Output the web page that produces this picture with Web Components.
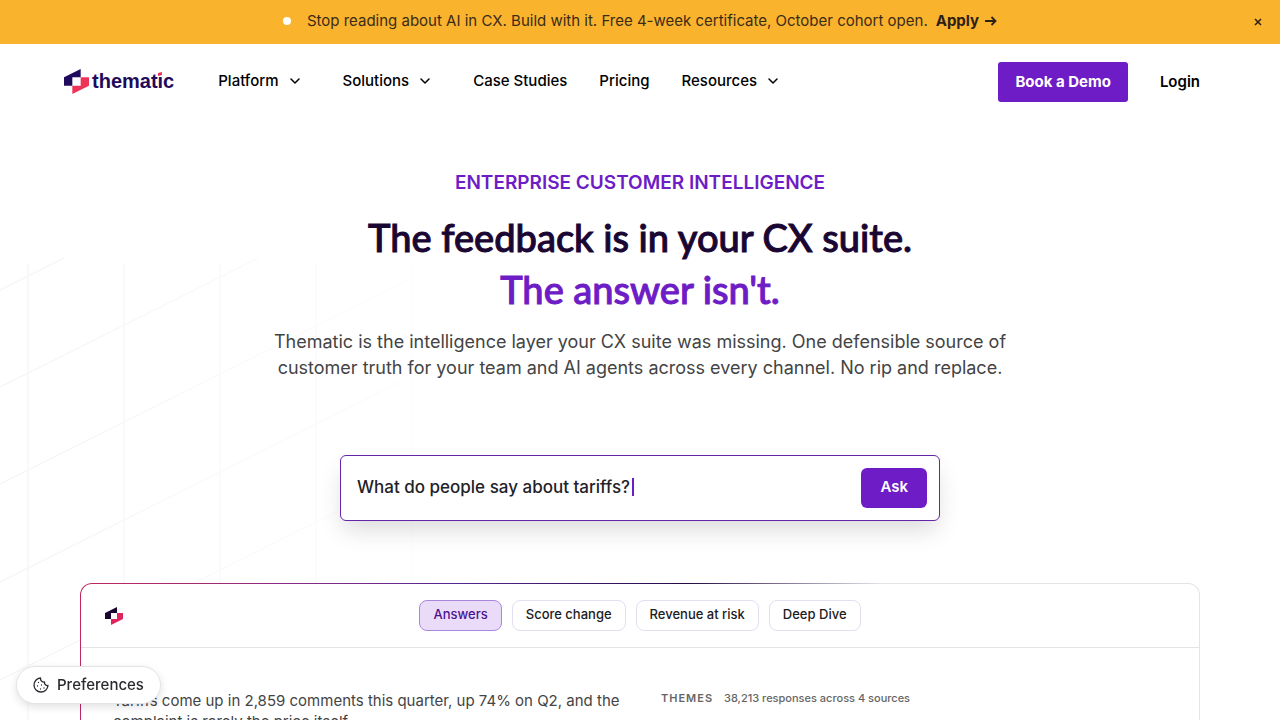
<!DOCTYPE html>
<html lang="en">
<head>
<meta charset="utf-8">
<title>Thematic</title>
<style>
html { scrollbar-width: none; }
body {
  margin: 0;
  background: #fff;
  color: #000;
  font-family: Inter, "Liberation Sans", sans-serif;
  font-size: 15px;
  line-height: 20px;
}
</style>
</head>
<body>
<promo-banner>
  Stop reading about AI in CX. Build with it. Free 4-week certificate, October cohort open.
  <a slot="action" href="#apply">Apply</a>
</promo-banner>
<site-header>
  <nav-item menu>Platform</nav-item>
  <nav-item menu>Solutions</nav-item>
  <nav-item>Case Studies</nav-item>
  <nav-item>Pricing</nav-item>
  <nav-item menu>Resources</nav-item>
</site-header>
<page-hero>
  <span slot="eyebrow">ENTERPRISE CUSTOMER INTELLIGENCE</span>
  <span slot="title">The feedback is in your CX suite.</span>
  <span slot="accent">The answer isn't.</span>
  Thematic is the intelligence layer your CX suite was missing. One defensible source of customer truth for your team and AI agents across every channel. No rip and replace.
  <ask-box slot="ask" value="What do people say about tariffs?"></ask-box>
  <answer-card slot="card">
    <tab-chip slot="tabs" selected>Answers</tab-chip>
    <tab-chip slot="tabs">Score change</tab-chip>
    <tab-chip slot="tabs">Revenue at risk</tab-chip>
    <tab-chip slot="tabs">Deep Dive</tab-chip>
    Tariffs come up in 2,859 comments this quarter, up 74% on Q2, and the complaint is rarely the price itself.
    <span slot="label">THEMES</span>
    <span slot="meta">38,213 responses across 4 sources</span>
  </answer-card>
</page-hero>
<cookie-preferences>Preferences</cookie-preferences>

<script>
  function define(name, html, setup) {
    const template = document.createElement('template');
    template.innerHTML = html;
    customElements.define(name, class extends HTMLElement {
      constructor() {
        super();
        this.attachShadow({ mode: 'open' });
        this.shadowRoot.appendChild(template.content.cloneNode(true));
      }

      $(x) {
        return this.shadowRoot.querySelector(x);
      }

      connectedCallback() {
        if (setup) setup(this);
      }
    });
  }

  define('brand-mark', `
<style>
:host { display: block; flex: none; width: 25px; }
svg { display: block; width: 100%; }
</style>
<svg viewBox="0 0 24 24" aria-hidden="true">
  <path fill="var(--mark-dark, #1f0a5c)" d="M0 8 16 0V8H8V16H0Z"/>
  <path fill="var(--mark-red, #ef3358)" d="M16 8H24V16L8 24V16H16Z"/>
</svg>
  `);

  define('promo-banner', `
<style>
:host {
  display: grid;
  grid-template-columns: 44px 1fr 44px;
  align-items: center;
  min-height: 44px;
  background: #fab32d;
  color: #3a2c18;
}
.message {
  grid-column: 2;
  display: flex;
  align-items: center;
  justify-content: center;
  padding-bottom: 2px;
}
.dot {
  width: 8px;
  height: 8px;
  border-radius: 50%;
  background: #fff;
  margin-right: 16px;
}
.action {
  display: flex;
  align-items: center;
  gap: 6px;
  margin-left: 8px;
  color: #2b2118;
  font-weight: 700;
}
::slotted(a) { color: inherit; text-decoration: none; }
button {
  border: 0;
  padding: 8px;
  background: none;
  justify-self: center;
  display: flex;
  cursor: pointer;
}
</style>
<div class="message">
  <span class="dot"></span>
  <span><slot></slot></span>
  <span class="action"><slot name="action"></slot>
    <svg width="12" height="12" viewBox="0 0 12 12" fill="none" stroke="currentColor" stroke-width="1.800"><path d="M0 6H10.500M6.500 2 10.500 6 6.500 10"/></svg>
  </span>
</div>
<button aria-label="Close banner">
  <svg width="8" height="8" viewBox="0 0 8 8" stroke="#2b2118" stroke-width="1.500"><path d="M1 1 7 7M7 1 1 7"/></svg>
</button>
  `);

  define('nav-item', `
<style>
:host { display: block; font-weight: 500; }
a {
  display: flex;
  align-items: center;
  gap: 10px;
  color: #000;
  text-decoration: none;
}
svg { display: none; }
:host([menu]) svg { display: block; }
:host([menu]) { padding-right: 10px; }
</style>
<a href="#"><slot></slot>
  <svg width="12" height="12" viewBox="0 0 12 12" fill="none" stroke="currentColor" stroke-width="1.500" stroke-linecap="round" stroke-linejoin="round"><path d="M2 4 6 8 10 4"/></svg>
</a>
  `);

  define('site-header', `
<style>
:host {
  display: flex;
  align-items: center;
  padding: 18px 64px;
}
.logo {
  display: flex;
  align-items: center;
  gap: 3px;
  color: #1f0a5c;
  font: 700 20px/24px "Liberation Sans", sans-serif;
  text-decoration: none;
  margin-right: 44px;
  padding-bottom: 2px;
}
.word { position: relative; }
/* the red tittle sits over the dot of the i */
.word svg { position: absolute; top: 3px; right: 11px; }
nav { display: flex; gap: 32px; flex: 1; padding-bottom: 2px; }
.demo {
  background: #6d1cc6;
  color: #fff;
  border: 0;
  border-radius: 3px;
  padding: 10px 17px;
  font: 700 15px/20px Inter, sans-serif;
}
.login {
  color: #000;
  font-weight: 600;
  text-decoration: none;
  margin: 0 16px 0 32px;
}
</style>
<a class="logo" href="#"><brand-mark></brand-mark><span class="word">thematic<svg width="6" height="4" viewBox="0 0 6 4"><path fill="#fff" d="M0 0H6V4H0Z"/><path fill="#ef3358" d="M1 1 5 0V3L1 4Z"/></svg></span></a>
<nav><slot></slot></nav>
<button class="demo">Book a Demo</button>
<a class="login" href="#login">Login</a>
  `);

  define('grid-lines', `
<style>
:host {
  display: block;
  overflow: hidden;
  -webkit-mask-image: linear-gradient(to right, #000, transparent 540px);
  mask-image: linear-gradient(to right, #000, transparent 540px);
}
svg { display: block; }
</style>
<svg width="600" height="600" fill="none" stroke="#f6f6f8" aria-hidden="true">
  <path stroke-width="1.500" d="M28 6V600M124 6V600M220 6V600M316 6V600M412 6V600M508 6V600"/>
  <path stroke-width="1.500" d="M0 32 64 0M0 129 258 0M0 226 408 22M0 324 400 124M0 422 344 250M0 519 344 347"/>
</svg>
  `);

  define('page-hero', `
<style>
:host {
  display: block;
  position: relative;
  padding: 52px 80px 0;
  text-align: center;
}
grid-lines {
  position: absolute;
  z-index: -1;
  top: 138px;
  left: 0;
  width: 100%;
  height: 600px;
}
.eyebrow {
  margin: 0 0 17px;
  color: #6d1cc6;
  font-size: 19px;
  line-height: 22px;
  font-weight: 600;
}
h1 {
  margin: 0 0 14px;
  color: #1a0633;
  font: 500 38px/52px Lato, "Noto Sans", sans-serif;
  -webkit-text-stroke: 1px currentColor;
}
h1 span { display: block; }
h1 .accent { color: #6d1cc6; }
.lead {
  max-width: 740px;
  margin: 0 auto 74px;
  color: #444;
  font-size: 18px;
  line-height: 26px;
}
</style>
<grid-lines></grid-lines>
<p class="eyebrow"><slot name="eyebrow"></slot></p>
<h1><span><slot name="title"></slot></span><span class="accent"><slot name="accent"></slot></span></h1>
<p class="lead"><slot></slot></p>
<slot name="ask"></slot>
<slot name="card"></slot>
  `);

  define('ask-box', `
<style>
:host { display: block; max-width: 600px; margin: 0 auto 62px; }
form {
  display: flex;
  align-items: center;
  border: 1px solid #6425ab;
  border-radius: 6px;
  background: #fff;
  padding: 12px 12px 12px 16px;
  box-shadow: 0 12px 24px -4px rgba(20, 20, 30, .16);
}
input {
  field-sizing: content;
  min-width: 0;
  border: 0;
  outline: 0;
  padding: 0 0 2px;
  background: none;
  color: #222228;
  font: 500 17px/24px Inter, sans-serif;
}
.caret { width: 2px; height: 18px; margin: 0 0 2px 2px; background: #6d1cc6; }
button {
  margin-left: auto;
  border: 0;
  border-radius: 6px;
  padding: 9px 19px 11px;
  background: #6d1cc6;
  color: #fff;
  font: 600 15px/20px Inter, sans-serif;
}
</style>
<form>
  <input type="text" aria-label="Ask a question"><span class="caret"></span>
  <button type="button">Ask</button>
</form>
  `, el => {
    el.$('input').value = el.getAttribute('value');
  });

  define('tab-chip', `
<style>
:host { display: block; }
button {
  border: 1px solid #e3def0;
  border-radius: 8px;
  padding: 5px 13px 7px;
  background: #fff;
  color: #1c1c22;
  font: 500 13px/17px Inter, sans-serif;
}
:host([selected]) button {
  border-color: #a987dd;
  background: #eadcf8;
  color: #4c1391;
}
</style>
<button><slot></slot></button>
  `);

  define('answer-card', `
<style>
:host {
  display: block;
  border: 1px solid transparent;
  border-radius: 12px;
  background:
    linear-gradient(#fff, #fff) padding-box,
    linear-gradient(100deg, #c4265e 0, #8a2c84 200px, #5b2791 360px, #240b45 600px, #e3e3e8 790px) border-box;
  text-align: left;
}
header {
  display: grid;
  grid-template-columns: 1fr auto 1fr;
  align-items: center;
  padding: 16px 24px;
  border-bottom: 1px solid #e4e4e8;
}
brand-mark { width: 18px; --mark-dark: #1a0633; --mark-red: #e0245e; }
.tabs { display: flex; gap: 10px; }
.body {
  display: grid;
  grid-template-columns: 516px 1fr;
  gap: 32px;
  padding: 42px 32px 80px;
}
p { margin: 0; color: #444; font-size: 15px; line-height: 21px; }
.themes { color: #666; font-size: 11px; line-height: 16px; font-weight: 500; }
.themes b { font-weight: 600; letter-spacing: 1px; margin-right: 8px; }
</style>
<header>
  <brand-mark></brand-mark>
  <div class="tabs"><slot name="tabs"></slot></div>
</header>
<div class="body">
  <p><slot></slot></p>
  <div class="themes"><b><slot name="label"></slot></b> <slot name="meta"></slot></div>
</div>
  `);

  define('cookie-preferences', `
<style>
:host { display: block; position: fixed; left: 16px; bottom: 16px; }
button {
  display: flex;
  align-items: center;
  gap: 8px;
  border: 1px solid #e4e4e8;
  border-radius: 20px;
  padding: 8px 16px;
  background: #fff;
  color: #2a2a30;
  font: 500 15px/20px Inter, sans-serif;
  box-shadow: 0 3px 8px rgba(0, 0, 0, .12);
}
</style>
<button>
  <svg width="16" height="16" viewBox="0 0 16 16" fill="none" stroke="currentColor" stroke-width="1.300" stroke-linejoin="round" aria-hidden="true">
    <path d="M7.500 1A7 7 0 1 0 15 8.500 3 3 0 0 1 11.500 5 3.500 3.500 0 0 1 7.500 1Z"/>
    <path stroke-linecap="round" d="M5.500 5.500V5.600M8.500 8V8.100M4.500 9V9.100M7.500 12V12.100M11 11V11.100"/>
  </svg>
  <slot></slot>
</button>
  `);
</script>
</body>
</html>
